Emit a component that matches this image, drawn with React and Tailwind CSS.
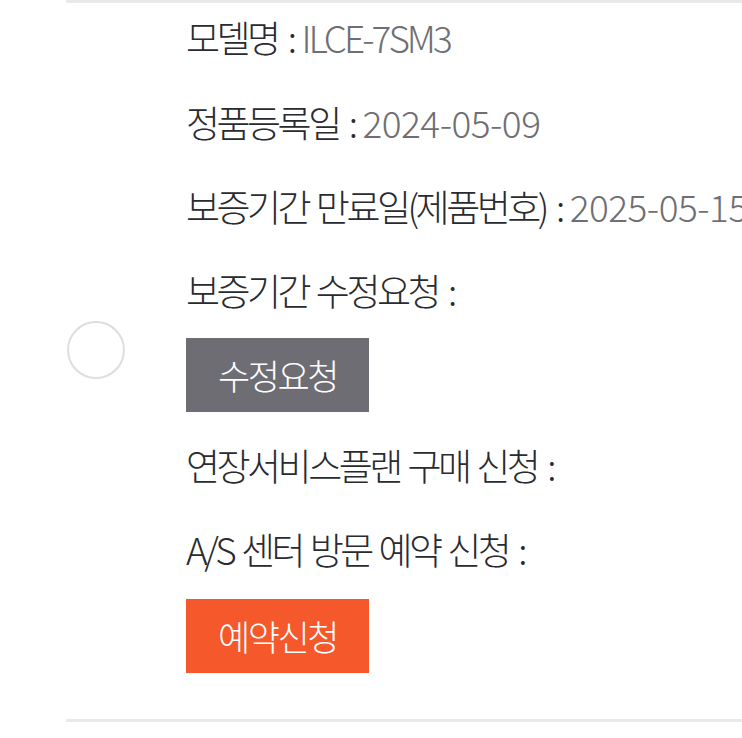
export default function App() {
  const font = { fontFamily: '"Noto Sans CJK KR", "Noto Sans", sans-serif' };
  return (
    <div className="w-[742px] h-[738px] bg-white overflow-hidden" style={font}>
      <div className="ml-[66px] flex border-t-[3px] border-b-[3px] border-[#e8e9eb]">
        <div className="flex items-center w-[120px] shrink-0">
          <div className="mb-[22px] ml-px w-[58px] h-[58px] rounded-full border-2 border-[#dedde2] bg-white"></div>
        </div>
        <div className="flex flex-col text-[37px] font-light tracking-[-3.5px] [word-spacing:3px] text-[#2a2b30] whitespace-nowrap">
          <div className="h-[81px] pb-[12px] flex items-center">
            모델명<span className="ml-[10px] mr-[8px]">:</span>
            <span className="text-[#6f6e73] tracking-[-3px]">ILCE-7SM3</span>
          </div>
          <div className="h-[84px] pb-[6px] flex items-center">
            정품등록일<span className="ml-[10px] mr-[8px]">:</span>
            <span className="text-[#6f6e73] tracking-[-0.5px]">2024-05-09</span>
          </div>
          <div className="h-[84px] pb-[6px] flex items-center">
            보증기간 만료일(제품번호)<span className="ml-[10px] mr-[8px]">:</span>
            <span className="text-[#6f6e73] tracking-[-0.5px]">2025-05-15(0000000)</span>
          </div>
          <div className="h-[84px] pb-[6px] flex items-center">
            보증기간 수정요청<span className="ml-[10px]">:</span>
          </div>
          <button className="mt-[2px] w-[183px] h-[74px] bg-[#6e6d73] text-white text-[35px] tracking-[-2.5px] flex items-center justify-center">
            수정요청
          </button>
          <div className="h-[114px] pb-[6px] flex items-center">
            연장서비스플랜 구매 신청<span className="ml-[10px]">:</span>
          </div>
          <div className="h-[54px] pb-[6px] flex items-center">
            A/S 센터 방문 예약 신청<span className="ml-[10px]">:</span>
          </div>
          <button className="mt-[19px] mb-[46px] w-[183px] h-[74px] bg-[#f4582b] text-white text-[35px] tracking-[-2.5px] flex items-center justify-center">
            예약신청
          </button>
        </div>
      </div>
    </div>
  );
}
